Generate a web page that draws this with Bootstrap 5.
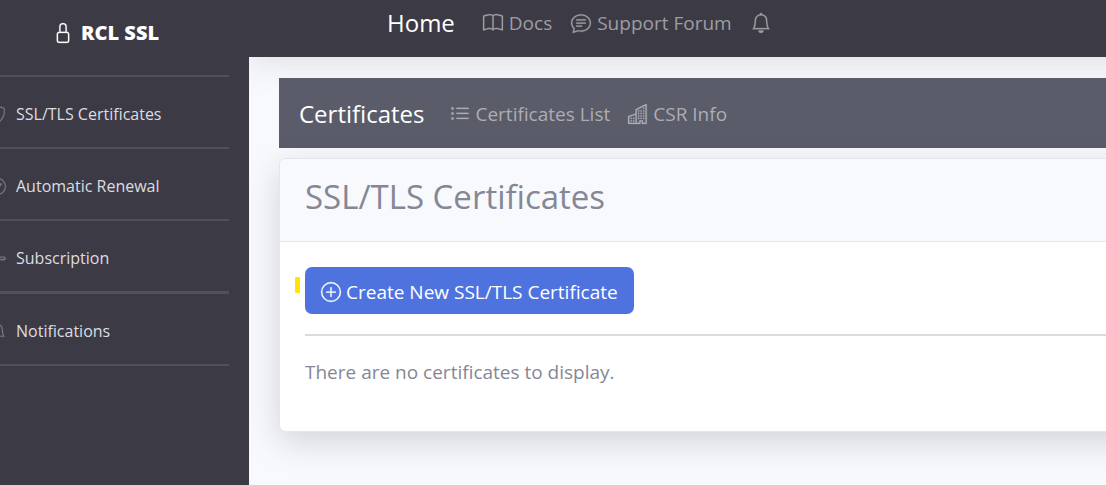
<!DOCTYPE html>
<html lang="en">
<head>
<meta charset="utf-8">
<meta name="viewport" content="width=device-width, initial-scale=1">
<title>RCL SSL - Certificates</title>
<link href="https://cdn.jsdelivr.net/npm/bootstrap@5.3.0/dist/css/bootstrap.min.css" rel="stylesheet">
<style>
  body { font-family: "Open Sans", "Noto Sans", sans-serif; font-size: 19px; line-height: 30px; color: #858796; background: #f8f9fc; }
  a { text-decoration: none; }
  svg { fill: currentColor; stroke: currentColor; stroke-width: .2; flex-shrink: 0; overflow: visible; }
  .side { width: 249px; background: #3c3b45; z-index: 1; }
  .side-brand { height: 75px; padding: 0 0 9px 53px; gap: 8px; font-size: 20px; font-weight: 800; color: #fff; }
  .side-list li { height: 72px; margin-right: 20px; border-top: 2px solid #50505e; }
  .side-list li:last-child { height: 75px; border-top-width: 3px; border-bottom: 2px solid #50505e; }
  .side-list a { margin-left: -11px; padding-top: 4px; gap: 10px; font-size: 16px; color: #dddde0; }
  .side-list svg { color: #77767d; }
  .bar-top { height: 57px; padding: 0 0 11px 138px; background: #3c3b45; margin-right: -40px; box-shadow: 0 3px 35px rgba(58, 59, 69, .15); }
  .page-main { padding: 21px 0 53px 30px; }
  .bar-sub { height: 70px; padding: 2px 0 0 20px; background: #5a5c69; }
  .bar-title { font-size: 24px; color: #fff; margin-right: 28px; }
  .bar-title:hover { color: #fff; }
  .bar-link { gap: 6px; margin-right: 19px; color: #9d9da2; }
  .bar-sub .bar-link { gap: 5px; margin-right: 18px; color: #acadb4; }
  .bar-sub .bar-title { margin-right: 26px; }
  .panel { border: 1px solid #e3e6f0; border-radius: 7px; margin: 10px -40px 0 0; box-shadow: 0 10px 35px rgba(0, 0, 0, .15); }
  .panel-head { height: 83px; padding: 17px 25px; background: #f8f9fc; border-bottom: 1px solid #e3e6f0; border-radius: 7px 7px 0 0; }
  .panel-head h1 { font-size: 33px; line-height: 42px; font-weight: 400; margin: 0; }
  .panel-body { padding: 25px 25px 44px; }
  .panel-body hr { margin: 20px 0 21px; border-top: 2px solid #858796; opacity: .3; }
  .btn-create { height: 47px; padding: 3px 16px 0; gap: 5px; font-size: 19px; border-radius: 7px; color: #fff; background: #4e73df; border: 0; }
  .btn-create:hover { color: #fff; background: #2e59d9; }
  .mark-yellow { left: -10px; top: 10px; width: 5px; height: 16px; border-radius: 1px; background: #ffe600; }
</style>
</head>
<body>
<div class="d-flex min-vh-100 overflow-hidden">
  <aside class="side flex-shrink-0 position-relative">
    <a href="#" class="side-brand d-flex align-items-center">
      <svg width="20" height="20" viewBox="0 0 16 16" aria-hidden="true"><path d="M8 1a2 2 0 0 1 2 2v4H6V3a2 2 0 0 1 2-2zm3 6V3a3 3 0 0 0-6 0v4a2 2 0 0 0-2 2v5a2 2 0 0 0 2 2h6a2 2 0 0 0 2-2V9a2 2 0 0 0-2-2zM5 8h6a1 1 0 0 1 1 1v5a1 1 0 0 1-1 1H5a1 1 0 0 1-1-1V9a1 1 0 0 1 1-1z"/></svg>
      RCL SSL
    </a>
    <ul class="side-list list-unstyled mb-0">
      <li><a href="#" class="d-flex align-items-center h-100"><svg width="17" height="17" viewBox="0 0 16 16" aria-hidden="true"><path d="M5.338 1.59a61.44 61.44 0 0 0-2.837.856.481.481 0 0 0-.328.39c-.554 4.157.726 7.19 2.253 9.188a10.725 10.725 0 0 0 2.287 2.233c.346.244.652.42.893.533.12.057.218.095.293.118a.55.55 0 0 0 .101.025.615.615 0 0 0 .1-.025c.076-.023.174-.061.294-.118.24-.113.547-.29.893-.533a10.726 10.726 0 0 0 2.287-2.233c1.527-1.997 2.807-5.031 2.253-9.188a.48.48 0 0 0-.328-.39c-.651-.213-1.75-.56-2.837-.855C9.552 1.29 8.531 1.067 8 1.067c-.53 0-1.552.223-2.662.524zM5.072.56C6.157.265 7.31 0 8 0s1.843.265 2.928.56c1.11.3 2.229.655 2.887.87a1.54 1.54 0 0 1 1.044 1.262c.596 4.477-.787 7.795-2.465 9.99a11.775 11.775 0 0 1-2.517 2.453 7.159 7.159 0 0 1-1.048.625c-.28.132-.581.24-.829.24s-.548-.108-.829-.24a7.158 7.158 0 0 1-1.048-.625 11.777 11.777 0 0 1-2.517-2.453C1.928 10.487.545 7.169 1.141 2.692A1.54 1.54 0 0 1 2.185 1.43 62.456 62.456 0 0 1 5.072.56z"/></svg>SSL/TLS Certificates</a></li>
      <li><a href="#" class="d-flex align-items-center h-100"><svg width="17" height="17" viewBox="0 0 16 16" aria-hidden="true"><path d="M8 15A7 7 0 1 1 8 1a7 7 0 0 1 0 14zm0 1A8 8 0 1 0 8 0a8 8 0 0 0 0 16z"/><path d="M10.97 4.97a.235.235 0 0 0-.02.022L7.477 9.417 5.384 7.323a.75.75 0 0 0-1.06 1.06L6.97 11.03a.75.75 0 0 0 1.079-.02l3.992-4.99a.75.75 0 0 0-1.071-1.05z"/></svg>Automatic Renewal</a></li>
      <li><a href="#" class="d-flex align-items-center h-100"><svg width="17" height="17" viewBox="0 0 16 16" aria-hidden="true"><path d="M0 8a4 4 0 0 1 7.465-2H14a.5.5 0 0 1 .354.146l1.5 1.5a.5.5 0 0 1 0 .708l-1.5 1.5a.5.5 0 0 1-.708 0L13 9.207l-.646.647a.5.5 0 0 1-.708 0L11 9.207l-.646.647a.5.5 0 0 1-.708 0L9 9.207l-.646.647A.5.5 0 0 1 8 10h-.535A4 4 0 0 1 0 8zm4-3a3 3 0 1 0 2.712 4.285A.5.5 0 0 1 7.163 9h.63l.853-.854a.5.5 0 0 1 .708 0l.646.647.646-.647a.5.5 0 0 1 .708 0l.646.647.646-.647a.5.5 0 0 1 .708 0l.646.647.793-.793-1-1h-6.63a.5.5 0 0 1-.451-.285A3 3 0 0 0 4 5z"/></svg>Subscription</a></li>
      <li><a href="#" class="d-flex align-items-center h-100"><svg width="17" height="17" viewBox="0 0 16 16" aria-hidden="true"><path d="M8 16a2 2 0 0 0 2-2H6a2 2 0 0 0 2 2zM8 1.918l-.797.161A4.002 4.002 0 0 0 4 6c0 .628-.134 2.197-.459 3.742-.16.767-.376 1.566-.663 2.258h10.244c-.287-.692-.502-1.49-.663-2.258C12.134 8.197 12 6.628 12 6a4.002 4.002 0 0 0-3.203-3.92L8 1.917zM14.22 12c.223.447.481.801.78 1H1c.299-.199.557-.553.78-1C2.68 10.2 3 6.88 3 6c0-2.42 1.72-4.44 4.005-4.901a1 1 0 1 1 1.99 0A5.002 5.002 0 0 1 13 6c0 .88.32 4.2 1.22 6z"/></svg>Notifications</a></li>
    </ul>
  </aside>

  <div class="flex-grow-1">
    <nav class="bar-top d-flex align-items-center" aria-label="Main">
      <a href="#" class="bar-title">Home</a>
      <a href="#" class="bar-link d-flex align-items-center"><svg width="20" height="20" viewBox="0 0 16 16" aria-hidden="true"><path d="M1 2.828c.885-.37 2.154-.769 3.388-.893 1.33-.134 2.458.063 3.112.752v9.746c-.935-.53-2.12-.603-3.213-.493-1.18.12-2.37.461-3.287.811V2.828zm7.5-.141c.654-.689 1.782-.886 3.112-.752 1.234.124 2.503.523 3.388.893v9.923c-.918-.35-2.107-.692-3.287-.81-1.094-.111-2.278-.039-3.213.492V2.687zM8 1.783C7.015.936 5.587.81 4.287.94c-1.514.153-3.042.672-3.994 1.105A.5.5 0 0 0 0 2.5v11a.5.5 0 0 0 .707.455c.882-.4 2.303-.881 3.68-1.02 1.409-.142 2.59.087 3.223.877a.5.5 0 0 0 .78 0c.633-.79 1.814-1.019 3.222-.877 1.378.139 2.8.62 3.681 1.02A.5.5 0 0 0 16 13.5v-11a.5.5 0 0 0-.293-.455c-.952-.433-2.48-.952-3.994-1.105C10.413.809 8.985.936 8 1.783z"/></svg>Docs</a>
      <a href="#" class="bar-link d-flex align-items-center"><svg width="20" height="20" viewBox="0 0 16 16" aria-hidden="true"><path d="M2.678 11.894a1 1 0 0 1 .287.801 10.97 10.97 0 0 1-.398 2c1.395-.323 2.247-.697 2.634-.893a1 1 0 0 1 .71-.074A8.06 8.06 0 0 0 8 14c3.996 0 7-2.807 7-6 0-3.192-3.004-6-7-6S1 4.808 1 8c0 1.468.617 2.83 1.678 3.894zm-.493 3.905a21.682 21.682 0 0 1-.713.129c-.2.032-.352-.176-.273-.362a9.68 9.68 0 0 0 .244-.637l.003-.01c.248-.72.45-1.548.524-2.319C.743 11.37 0 9.76 0 8c0-3.866 3.582-7 8-7s8 3.134 8 7-3.582 7-8 7a9.06 9.06 0 0 1-2.347-.306c-.52.263-1.639.742-3.468 1.105z"/><path d="M4 5.5a.5.5 0 0 1 .5-.5h7a.5.5 0 0 1 0 1h-7a.5.5 0 0 1-.5-.5zM4 8a.5.5 0 0 1 .5-.5h7a.5.5 0 0 1 0 1h-7A.5.5 0 0 1 4 8zm0 2.5a.5.5 0 0 1 .5-.5h4a.5.5 0 0 1 0 1h-4a.5.5 0 0 1-.5-.5z"/></svg>Support Forum</a>
      <a href="#" class="bar-link d-flex align-items-center" aria-label="Notifications"><svg width="20" height="20" viewBox="0 0 16 16" aria-hidden="true"><path d="M8 16a2 2 0 0 0 2-2H6a2 2 0 0 0 2 2zM8 1.918l-.797.161A4.002 4.002 0 0 0 4 6c0 .628-.134 2.197-.459 3.742-.16.767-.376 1.566-.663 2.258h10.244c-.287-.692-.502-1.49-.663-2.258C12.134 8.197 12 6.628 12 6a4.002 4.002 0 0 0-3.203-3.92L8 1.917zM14.22 12c.223.447.481.801.78 1H1c.299-.199.557-.553.78-1C2.68 10.2 3 6.88 3 6c0-2.42 1.72-4.44 4.005-4.901a1 1 0 1 1 1.99 0A5.002 5.002 0 0 1 13 6c0 .88.32 4.2 1.22 6z"/></svg></a>
    </nav>

    <main class="page-main">
      <nav class="bar-sub d-flex align-items-center" aria-label="Certificates">
        <a href="#" class="bar-title">Certificates</a>
        <a href="#" class="bar-link d-flex align-items-center"><svg width="20" height="20" viewBox="0 0 16 16" aria-hidden="true"><path fill-rule="evenodd" d="M5 11.5a.5.5 0 0 1 .5-.5h9a.5.5 0 0 1 0 1h-9a.5.5 0 0 1-.5-.5zm0-4a.5.5 0 0 1 .5-.5h9a.5.5 0 0 1 0 1h-9a.5.5 0 0 1-.5-.5zm0-4a.5.5 0 0 1 .5-.5h9a.5.5 0 0 1 0 1h-9a.5.5 0 0 1-.5-.5zm-3 1a1 1 0 1 0 0-2 1 1 0 0 0 0 2zm0 4a1 1 0 1 0 0-2 1 1 0 0 0 0 2zm0 4a1 1 0 1 0 0-2 1 1 0 0 0 0 2z"/></svg>Certificates List</a>
        <a href="#" class="bar-link d-flex align-items-center"><svg width="20" height="20" viewBox="0 0 16 16" aria-hidden="true"><path fill-rule="evenodd" d="M14.763.075A.5.5 0 0 1 15 .5v15a.5.5 0 0 1-.5.5h-3a.5.5 0 0 1-.5-.5V14h-1v1.5a.5.5 0 0 1-.5.5h-9a.5.5 0 0 1-.5-.5V10a.5.5 0 0 1 .342-.474L6 7.64V4.5a.5.5 0 0 1 .276-.447l8-4a.5.5 0 0 1 .487.022zM6 8.694 1 10.36V15h5V8.694zM7 15h2v-1.5a.5.5 0 0 1 .5-.5h2a.5.5 0 0 1 .5.5V15h2V1.309l-7 3.5V15z"/><path d="M2 11h1v1H2v-1zm2 0h1v1H4v-1zm-2 2h1v1H2v-1zm2 0h1v1H4v-1zm4-4h1v1H8V9zm2 0h1v1h-1V9zm-2 2h1v1H8v-1zm2 0h1v1h-1v-1zm2-2h1v1h-1V9zm0 2h1v1h-1v-1zM8 7h1v1H8V7zm2 0h1v1h-1V7zm2 0h1v1h-1V7zM8 5h1v1H8V5zm2 0h1v1h-1V5zm2 0h1v1h-1V5zm0-2h1v1h-1V3z"/></svg>CSR Info</a>
      </nav>

      <section class="panel bg-white">
        <div class="panel-head"><h1>SSL/TLS Certificates</h1></div>
        <div class="panel-body">
          <div class="position-relative">
            <span class="mark-yellow position-absolute"></span>
            <button type="button" class="btn btn-create d-flex align-items-center"><svg width="20" height="20" viewBox="0 0 16 16" aria-hidden="true"><path d="M8 15A7 7 0 1 1 8 1a7 7 0 0 1 0 14zm0 1A8 8 0 1 0 8 0a8 8 0 0 0 0 16z"/><path d="M8 4a.5.5 0 0 1 .5.5v3h3a.5.5 0 0 1 0 1h-3v3a.5.5 0 0 1-1 0v-3h-3a.5.5 0 0 1 0-1h3v-3A.5.5 0 0 1 8 4z"/></svg>Create New SSL/TLS Certificate</button>
          </div>
          <hr>
          <p class="mb-0">There are no certificates to display.</p>
        </div>
      </section>
    </main>
  </div>
</div>
<script src="https://cdn.jsdelivr.net/npm/bootstrap@5.3.0/dist/js/bootstrap.bundle.min.js"></script>
</body>
</html>
